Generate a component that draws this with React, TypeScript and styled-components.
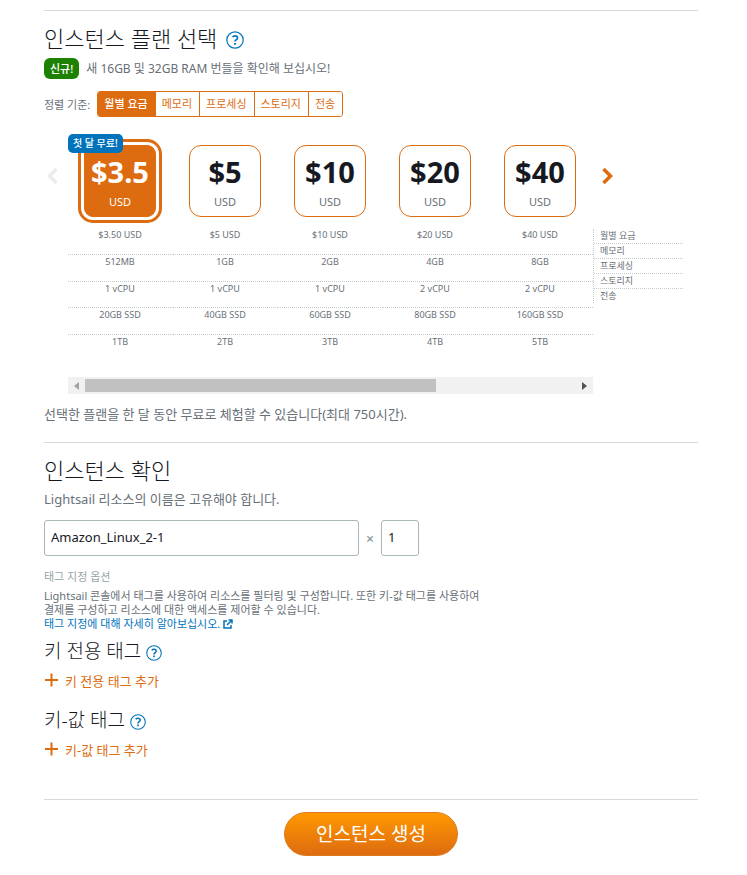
import React, { useState } from "react";
import styled, { createGlobalStyle, css } from "styled-components";

const color = {
  orange: "#dd6b10",
  blue: "#0073bb",
  green: "#1d8102",
  ink: "#16191f",
  text: "#687078",
  muted: "#aab7b8",
  line: "#d5dbdb",
  dots: "#c4cccc",
};

const GlobalStyle = createGlobalStyle`
  *, *::before, *::after { box-sizing: border-box; }
  body {
    margin: 0;
    background: #fff;
    color: ${color.text};
    font-family: "Noto Sans", "Noto Sans CJK KR", sans-serif;
    font-size: 12px;
    word-break: keep-all;
  }
  h2, h3, p, ul { margin: 0; padding: 0; }
  button, input { font: inherit; }
  button { cursor: pointer; }
`;

const Page = styled.main`
  padding: 10px 49px 18px 44px;
`;

const Section = styled.section`
  border-top: 1px solid ${color.line};
  padding-top: 11px;
`;

const Title = styled.h2`
  display: flex;
  align-items: center;
  gap: 9px;
  color: ${color.ink};
  font-size: 22px;
  font-weight: 300;
  line-height: 32px;
`;

const Subtitle = styled.h3`
  display: flex;
  align-items: center;
  gap: 5px;
  color: ${color.ink};
  font-size: 19px;
  font-weight: 300;
  line-height: 28px;
`;

const HelpButton = styled.button<{ $size: number }>`
  display: flex;
  padding: 0;
  border: 0;
  margin-top: 4px;
  background: none;
  color: ${color.blue};
  svg {
    width: ${(p) => p.$size}px;
    height: ${(p) => p.$size}px;
  }
`;

const Notice = styled.p`
  display: flex;
  align-items: center;
  gap: 7px;
  margin-top: 4px;
  line-height: 21px;
`;

const NewBadge = styled.strong`
  padding: 0 6px;
  border-radius: 6px;
  background: ${color.green};
  color: #fff;
  font-size: 11px;
  font-weight: 500;
`;

const SortBar = styled.div`
  display: flex;
  align-items: center;
  gap: 7px;
  margin-top: 12px;
  font-size: 11px;
`;

const SortGroup = styled.div`
  display: flex;
  border: 1px solid ${color.orange};
  border-radius: 3px;
  overflow: hidden;
`;

const SortButton = styled.button<{ $active: boolean }>`
  height: 24px;
  padding: 0 7px 3px 6px;
  border: 0;
  background: ${(p) => (p.$active ? color.orange : "#fff")};
  color: ${(p) => (p.$active ? "#fff" : color.orange)};
  font-weight: ${(p) => (p.$active ? 500 : 400)};
  & + & {
    border-left: 1px solid ${color.orange};
  }
`;

const Picker = styled.div`
  display: flex;
  margin-top: 17px;
`;

const Arrow = styled.button`
  display: flex;
  align-items: center;
  width: 24px;
  height: 84px;
  padding: 0;
  border: 0;
  background: none;
  color: ${color.orange};
  &:disabled {
    color: #eaeded;
  }
`;

const Plans = styled.div`
  flex: 0 1 525px;
  min-width: 0;
`;

const PlanTable = styled.table`
  width: 100%;
  table-layout: fixed;
  border-collapse: collapse;
  font-size: 9px;
  text-align: center;
`;

const PlanHead = styled.th`
  height: 93px;
  padding: 11px 1px 0 0;
  font-weight: 400;
  vertical-align: top;
`;

const Spec = styled.td<{ $compact: boolean }>`
  height: ${(p) => (p.$compact ? 26 : 27)}px;
  padding: 0 1px ${(p) => (p.$compact ? 10 : 11)}px 0;
  line-height: 14px;
  tr + tr > & {
    border-top: 1px dotted ${color.dots};
  }
`;

const PlanHolder = styled.div`
  position: relative;
`;

const PlanButton = styled.button<{ $selected: boolean }>`
  display: inline-flex;
  flex-direction: column;
  align-items: center;
  justify-content: center;
  gap: 4px;
  width: 72px;
  height: 72px;
  padding: 6px 0 0;
  border: 1px solid ${color.orange};
  border-radius: 12px;
  background: #fff;
  color: ${color.text};
  ${(p) =>
    p.$selected &&
    css`
      border-radius: 9px;
      background: ${color.orange};
      color: #fff;
      box-shadow: 0 0 0 3px #fff, 0 0 0 6px ${color.orange};
    `}
`;

const Price = styled.span<{ $selected: boolean }>`
  color: ${(p) => (p.$selected ? "#fff" : color.ink)};
  font-size: 29px;
  font-weight: 700;
  line-height: 32px;
`;

const Currency = styled.span`
  font-size: 11px;
  line-height: 20px;
`;

const FreeBadge = styled.span`
  position: absolute;
  z-index: 1;
  top: -11px;
  left: 0;
  padding: 0 5px;
  border-radius: 5px;
  background: ${color.blue};
  color: #fff;
  font-size: 10px;
  font-weight: 500;
  line-height: 19px;
`;

const ScrollTrack = styled.div`
  display: flex;
  align-items: center;
  height: 17px;
  margin-top: 16px;
  background: #f1f1f1;
`;

const ScrollStep = styled.button`
  display: flex;
  align-items: center;
  justify-content: center;
  width: 17px;
  height: 17px;
  padding: 0;
  border: 0;
  background: none;
  color: #505050;
  &:disabled {
    color: #a3a3a3;
  }
`;

const ScrollRail = styled.div`
  flex: 1;
`;

const ScrollThumb = styled.div`
  width: 71.5%;
  height: 13px;
  background: #c1c1c1;
`;

const Side = styled.div`
  flex: 0 1 90px;
`;

const NextArrow = styled(Arrow)`
  margin-left: 8px;
`;

const Legend = styled.ul`
  margin-top: 11px;
  border-left: 1px dotted ${color.dots};
  list-style: none;
  font-size: 9px;
  line-height: 14px;
`;

const LegendItem = styled.li`
  padding-left: 6px;
  & + & {
    border-top: 1px dotted ${color.dots};
  }
`;

const TrialNote = styled.p`
  margin: 10px 0 18px;
  font-size: 13px;
  line-height: 20px;
`;

const Hint = styled.p`
  margin-top: 3px;
  font-size: 13px;
  line-height: 20px;
`;

const NameRow = styled.div`
  display: flex;
  align-items: center;
  gap: 6px;
  margin-top: 11px;
`;

const TextField = styled.input<{ $width: number }>`
  flex: 0 1 ${(p) => p.$width}px;
  min-width: 0;
  height: 36px;
  padding: 0 6px 2px;
  border: 1px solid ${color.muted};
  border-radius: 3px;
  color: ${color.ink};
  font-size: 13px;
`;

const Times = styled.span`
  width: 10px;
  color: #879596;
  font-size: 14px;
  font-weight: 500;
  text-align: center;
`;

const TagLabel = styled.p`
  margin-top: 12px;
  color: #95a5a6;
  font-size: 11px;
  line-height: 18px;
`;

const TagText = styled.p`
  max-width: 460px;
  margin: 3px 0 6px;
  font-size: 11px;
  line-height: 14px;
`;

const DocLink = styled.a`
  display: flex;
  align-items: center;
  gap: 3px;
  color: ${color.blue};
  text-decoration: none;
`;

const TagGroup = styled.div`
  margin-bottom: 13px;
`;

const AddButton = styled.button`
  display: flex;
  align-items: center;
  gap: 6px;
  height: 26px;
  margin-top: 2px;
  padding: 0;
  border: 0;
  background: none;
  color: ${color.orange};
  font-size: 13px;
`;

const Footer = styled.footer`
  display: flex;
  justify-content: center;
  margin-top: 37px;
  padding-top: 12px;
  border-top: 1px solid ${color.line};
`;

const CreateButton = styled.button`
  height: 44px;
  padding: 0 31px 2px;
  border: 1px solid #dd7a1c;
  border-radius: 22px;
  background: linear-gradient(#ff9900, #dd6b10);
  color: #fff;
  font-size: 19px;
`;

function Help({ label, size = 18 }: { label: string; size?: number }) {
  return (
    <HelpButton type="button" aria-label={label} $size={size}>
      <svg viewBox="0 0 18 18" fill="none" stroke="currentColor">
        <circle cx="9" cy="9" r="8.2" strokeWidth="1.2" />
        <path d="M6.5 6.1C7.1 5.2 8 4.8 9 4.8c1.5 0 2.5.8 2.5 2.1 0 1.8-2.5 1.7-2.5 3.7" strokeWidth="1.7" />
        <path d="M9 11.9v1.9" strokeWidth="1.9" />
      </svg>
    </HelpButton>
  );
}

function Chevron({ flip = false }: { flip?: boolean }) {
  return (
    <svg width="18" height="20" viewBox="0 0 18 20" fill="none" stroke="currentColor" strokeWidth="3.5">
      <path d={flip ? "M12.5 3L5.5 10l7 7" : "M2.5 3l7 7-7 7"} />
    </svg>
  );
}

function Plus() {
  return (
    <svg width="15" height="14" viewBox="0 0 15 14" stroke="currentColor" strokeWidth="2">
      <path d="M7.5 0.5v13M1 7h13" />
    </svg>
  );
}

function ExternalIcon() {
  return (
    <svg width="10" height="10" viewBox="0 0 10 10" fill="none" stroke="currentColor" strokeWidth="1.5">
      <path d="M4 2H1v7h7V6M5.5 1H9v3.5M9 1L4 6" />
    </svg>
  );
}

const sortOptions = ["월별 요금", "메모리", "프로세싱", "스토리지", "전송"];

const plans = [
  { price: "$3.5", specs: ["$3.50 USD", "512MB", "1 vCPU", "20GB SSD", "1TB"], free: true },
  { price: "$5", specs: ["$5 USD", "1GB", "1 vCPU", "40GB SSD", "2TB"] },
  { price: "$10", specs: ["$10 USD", "2GB", "1 vCPU", "60GB SSD", "3TB"] },
  { price: "$20", specs: ["$20 USD", "4GB", "2 vCPU", "80GB SSD", "4TB"] },
  { price: "$40", specs: ["$40 USD", "8GB", "2 vCPU", "160GB SSD", "5TB"] },
];

export default function App() {
  const [sort, setSort] = useState(0);
  const [selected, setSelected] = useState(0);
  return (
    <>
      <GlobalStyle />
      <Page>
        <Section>
          <Title>
            인스턴스 플랜 선택
            <Help label="인스턴스 플랜 도움말" />
          </Title>
          <Notice>
            <NewBadge>신규!</NewBadge>새 16GB 및 32GB RAM 번들을 확인해 보십시오!
          </Notice>
          <SortBar>
            <span id="sort-label">정렬 기준:</span>
            <SortGroup role="group" aria-labelledby="sort-label">
              {sortOptions.map((name, i) => (
                <SortButton key={name} type="button" $active={i === sort} aria-pressed={i === sort} onClick={() => setSort(i)}>
                  {name}
                </SortButton>
              ))}
            </SortGroup>
          </SortBar>
          <Picker>
            <Arrow type="button" aria-label="이전" disabled>
              <Chevron flip />
            </Arrow>
            <Plans>
              <PlanTable>
                <thead>
                  <tr>
                    {plans.map((plan, i) => (
                      <PlanHead key={plan.price} scope="col">
                        <PlanHolder>
                          {plan.free && <FreeBadge>첫 달 무료!</FreeBadge>}
                          <PlanButton type="button" $selected={i === selected} aria-pressed={i === selected} onClick={() => setSelected(i)}>
                            <Price $selected={i === selected}>{plan.price}</Price>
                            <Currency>USD</Currency>
                          </PlanButton>
                        </PlanHolder>
                      </PlanHead>
                    ))}
                  </tr>
                </thead>
                <tbody>
                  {sortOptions.map((name, row) => (
                    <tr key={name}>
                      {plans.map((plan) => (
                        <Spec key={plan.price} $compact={row === 2}>
                          {plan.specs[row]}
                        </Spec>
                      ))}
                    </tr>
                  ))}
                </tbody>
              </PlanTable>
              <ScrollTrack>
                <ScrollStep type="button" aria-label="왼쪽으로 스크롤" disabled>
                  <svg width="5" height="8" viewBox="0 0 5 8" fill="currentColor">
                    <path d="M5 0v8L0 4z" />
                  </svg>
                </ScrollStep>
                <ScrollRail>
                  <ScrollThumb />
                </ScrollRail>
                <ScrollStep type="button" aria-label="오른쪽으로 스크롤">
                  <svg width="5" height="8" viewBox="0 0 5 8" fill="currentColor">
                    <path d="M0 0v8l5-4z" />
                  </svg>
                </ScrollStep>
              </ScrollTrack>
            </Plans>
            <Side>
              <NextArrow type="button" aria-label="다음">
                <Chevron />
              </NextArrow>
              <Legend>
                {sortOptions.map((name) => (
                  <LegendItem key={name}>{name}</LegendItem>
                ))}
              </Legend>
            </Side>
          </Picker>
          <TrialNote>선택한 플랜을 한 달 동안 무료로 체험할 수 있습니다(최대 750시간).</TrialNote>
        </Section>

        <Section>
          <Title>인스턴스 확인</Title>
          <Hint id="name-hint">Lightsail 리소스의 이름은 고유해야 합니다.</Hint>
          <NameRow>
            <TextField $width={315} aria-label="인스턴스 이름" aria-describedby="name-hint" defaultValue="Amazon_Linux_2-1" />
            <Times>×</Times>
            <TextField $width={38} aria-label="인스턴스 수" inputMode="numeric" defaultValue="1" />
          </NameRow>
          <TagLabel>태그 지정 옵션</TagLabel>
          <TagText>
            Lightsail 콘솔에서 태그를 사용하여 리소스를 필터링 및 구성합니다. 또한 키-값 태그를 사용하여 결제를 구성하고 리소스에 대한 액세스를 제어할 수 있습니다.
            <DocLink href="#tags">
              태그 지정에 대해 자세히 알아보십시오.
              <ExternalIcon />
            </DocLink>
          </TagText>
          <TagGroup>
            <Subtitle>
              키 전용 태그
              <Help label="키 전용 태그 도움말" size={16} />
            </Subtitle>
            <AddButton type="button">
              <Plus />키 전용 태그 추가
            </AddButton>
          </TagGroup>
          <TagGroup>
            <Subtitle>
              키-값 태그
              <Help label="키-값 태그 도움말" size={16} />
            </Subtitle>
            <AddButton type="button">
              <Plus />키-값 태그 추가
            </AddButton>
          </TagGroup>
        </Section>
        <Footer>
          <CreateButton type="button">인스턴스 생성</CreateButton>
        </Footer>
      </Page>
    </>
  );
}
